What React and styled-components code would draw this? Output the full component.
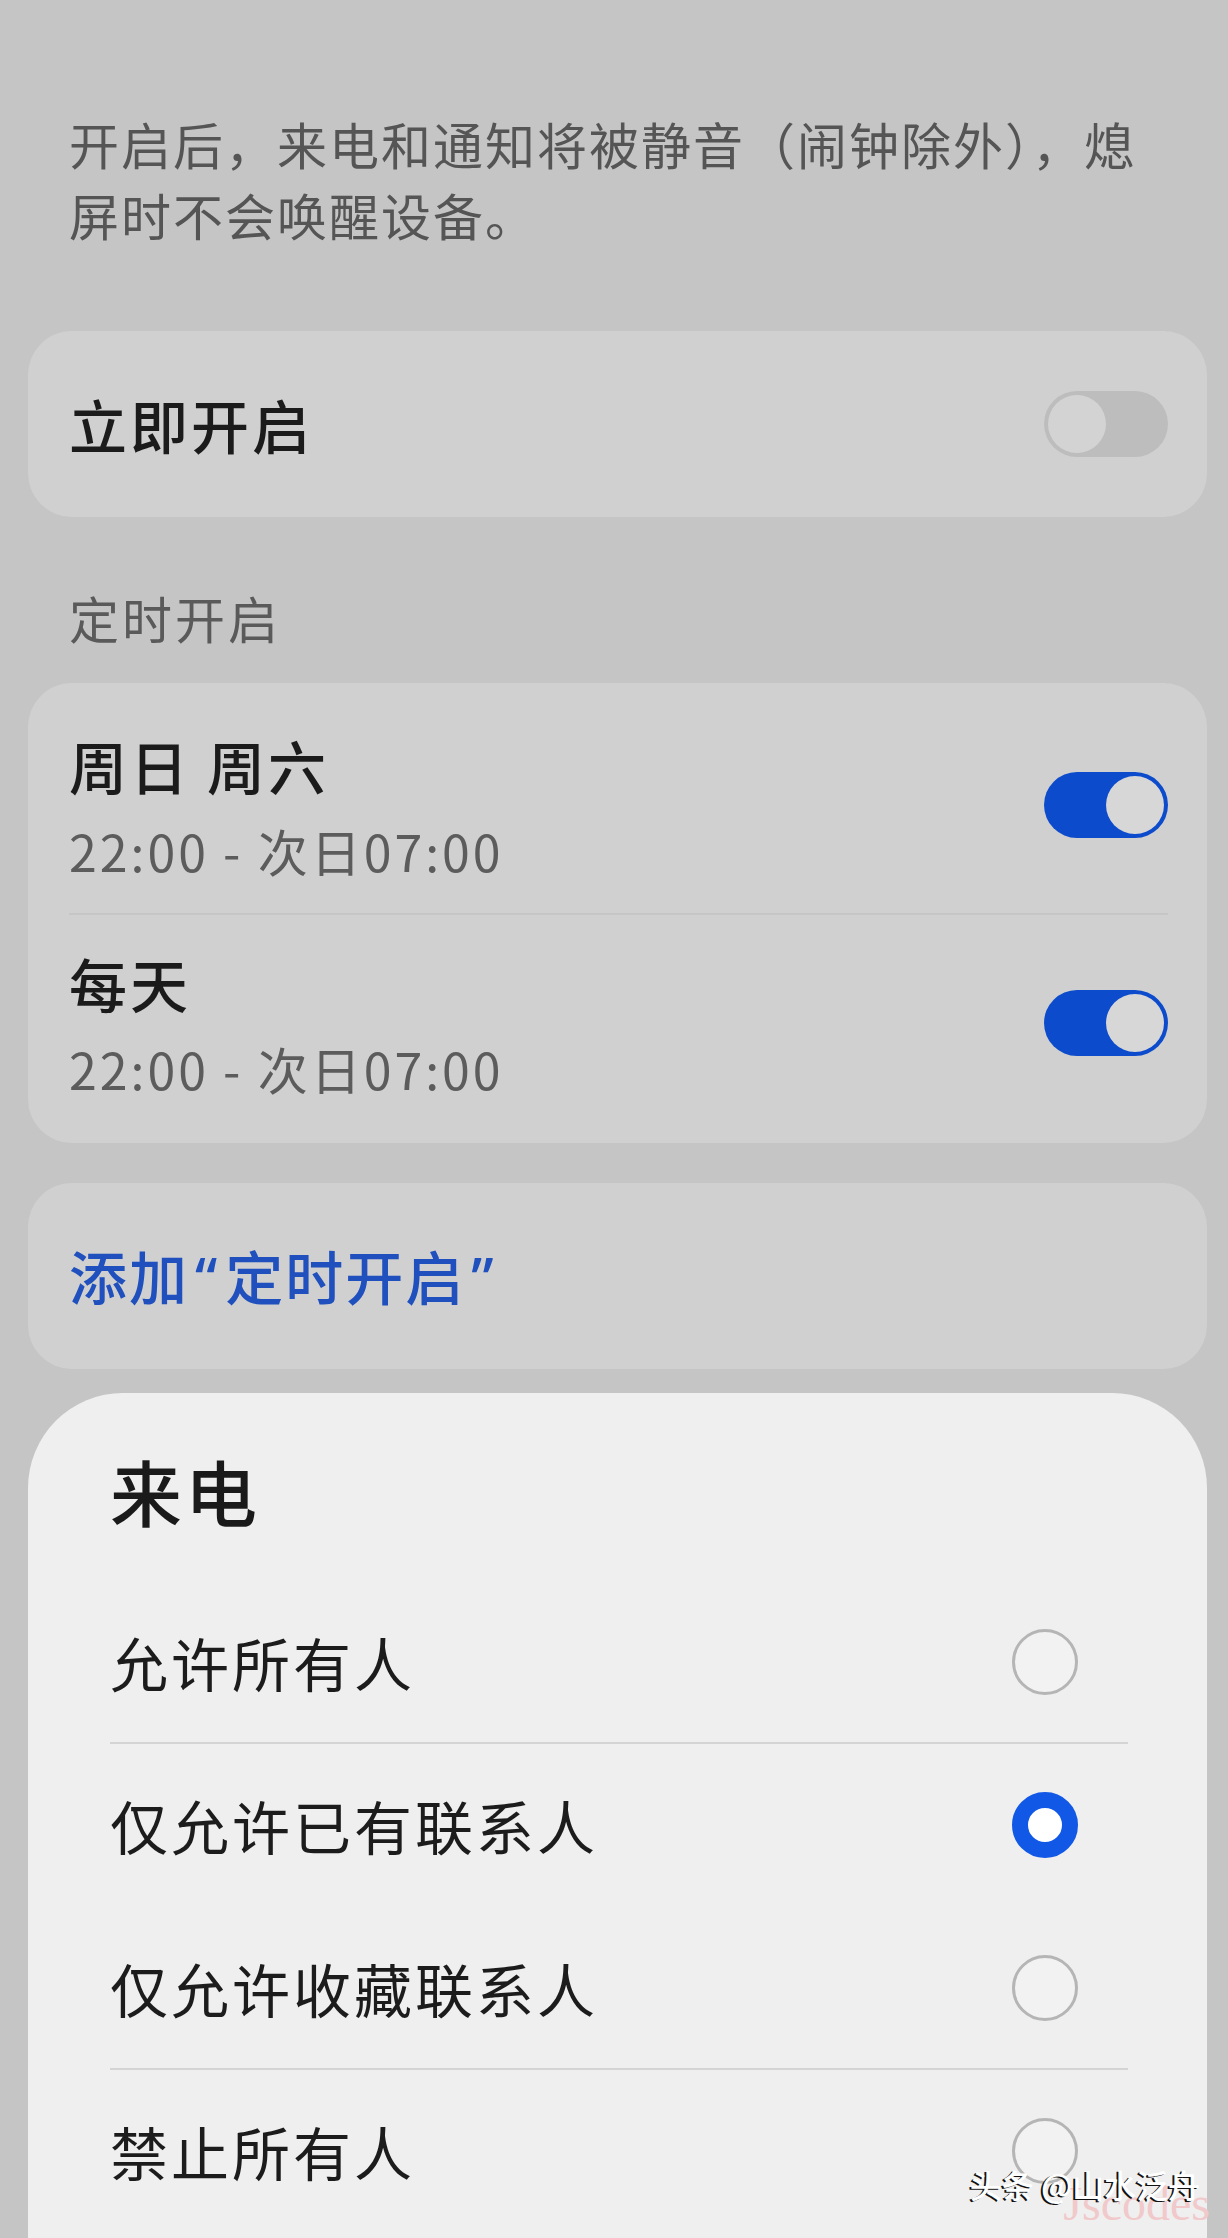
import styled, { createGlobalStyle } from "styled-components"

const GlobalStyle = createGlobalStyle`
    body {
        margin: 0;
        background: #c5c5c5;
        font-family: "Noto Sans CJK SC", "Noto Sans", sans-serif;
    }
`

const schedules = [
    { title: "周日 周六", time: "22:00 - 次日07:00" },
    { title: "每天", time: "22:00 - 次日07:00" },
]

const options = [
    { label: "允许所有人", checked: false, divider: true },
    { label: "仅允许已有联系人", checked: true, divider: false },
    { label: "仅允许收藏联系人", checked: false, divider: true },
    { label: "禁止所有人", checked: false, divider: false },
]

export default function App() {
    return (
        <Page>
            <GlobalStyle />
            <Description>
                开启后，来电和通知将被静音（闹钟除外），熄<br />
                屏时不会唤醒设备。
            </Description>

            <Card top={81}>
                <Title>立即开启</Title>
                <Switch on={false} />
            </Card>

            <SectionLabel>定时开启</SectionLabel>

            <ListCard>
                {schedules.map((s, i) => (
                    <ScheduleRow key={i} last={i === schedules.length - 1}>
                        <div>
                            <Title>{s.title}</Title>
                            <Time>{s.time}</Time>
                        </div>
                        <Switch on />
                    </ScheduleRow>
                ))}
            </ListCard>

            <Card top={40}>
                <AddLink>
                    添加<Quote>“</Quote>定时开启<Quote>”</Quote>
                </AddLink>
            </Card>

            <Sheet>
                <SheetTitle>来电</SheetTitle>
                {options.map((o) => (
                    <OptionRow key={o.label} divider={o.divider}>
                        <OptionLabel>{o.label}</OptionLabel>
                        <Radio checked={o.checked} />
                    </OptionRow>
                ))}
            </Sheet>

            <Mark>
                <Faint>Jscodes</Faint>
                <Credit>头条 @山水泛舟</Credit>
            </Mark>
        </Page>
    )
}

function Switch({ on }) {
    return (
        <Track on={on}>
            <Knob on={on} />
        </Track>
    )
}

const Page = styled.div`
    position: relative;
    display: flex;
    flex-direction: column;
    height: 2238px;
    padding: 0 21px 0 28px;
    box-sizing: border-box;
    overflow: hidden;
`

const Description = styled.p`
    margin: 108px 0 0;
    padding-left: 41px;
    font-size: 50px;
    line-height: 71px;
    letter-spacing: 2px;
    color: #555555;
`

const Card = styled.div`
    display: flex;
    align-items: center;
    justify-content: space-between;
    height: 186px;
    margin-top: ${(p) => p.top}px;
    padding: 0 39px 0 41px;
    box-sizing: border-box;
    background: #d0d0d0;
    border-radius: 44px;
`

const Title = styled.div`
    font-size: 58px;
    line-height: 70px;
    letter-spacing: 3px;
    font-weight: 500;
    color: #1b1b1b;
`

const Time = styled.div`
    margin-top: 20px;
    font-size: 50px;
    line-height: 60px;
    letter-spacing: 3px;
    color: #5c5c5c;
`

const SectionLabel = styled.div`
    margin: 65px 0 31px;
    padding-left: 41px;
    font-size: 50px;
    line-height: 70px;
    letter-spacing: 3px;
    color: #5a5a5a;
`

const ListCard = styled.div`
    padding: 14px 39px 12px 41px;
    background: #d0d0d0;
    border-radius: 44px;
`

const ScheduleRow = styled.div`
    display: flex;
    align-items: center;
    justify-content: space-between;
    padding: 33px 0;
    border-bottom: ${(p) => (p.last ? "none" : "2px solid #c6c6c6")};
`

const Track = styled.div`
    position: relative;
    flex-shrink: 0;
    width: 124px;
    height: 66px;
    border-radius: 33px;
    background: ${(p) => (p.on ? "#0c4bcc" : "#bdbdbd")};
`

const Knob = styled.div`
    position: absolute;
    top: 4px;
    left: ${(p) => (p.on ? "62px" : "4px")};
    width: 58px;
    height: 58px;
    border-radius: 50%;
    background: ${(p) => (p.on ? "#d7d7d7" : "#d3d3d3")};
`

const AddLink = styled.div`
    font-size: 58px;
    line-height: 70px;
    letter-spacing: 2px;
    font-weight: 500;
    color: #1f50bd;
`

const Quote = styled.span`
    font-family: "Noto Sans", sans-serif;
    padding: 0 6px;
`

const Sheet = styled.div`
    flex: 1;
    margin-top: 24px;
    padding: 52px 79px 0 82px;
    background: #efefef;
    border-radius: 95px 95px 0 0;
`

const SheetTitle = styled.div`
    margin-bottom: 46px;
    font-size: 72px;
    line-height: 90px;
    letter-spacing: 3px;
    font-weight: 500;
    color: #1a1a1a;
`

const OptionRow = styled.div`
    display: flex;
    align-items: center;
    justify-content: space-between;
    height: 163px;
    padding-right: 50px;
    box-sizing: border-box;
    border-bottom: 2px solid ${(p) => (p.divider ? "#d4d4d4" : "transparent")};
`

const OptionLabel = styled.div`
    font-size: 58px;
    line-height: 70px;
    letter-spacing: 3px;
    color: #1c1c1c;
`

const Radio = styled.div`
    width: 66px;
    height: 66px;
    box-sizing: border-box;
    border-radius: 50%;
    border: ${(p) => (p.checked ? "16px solid #1258e6" : "3px solid #b5b5b5")};
    background: ${(p) => (p.checked ? "#ffffff" : "#f2f2f2")};
`

const Mark = styled.div`
    position: absolute;
    right: 18px;
    bottom: 0;
    width: 240px;
    height: 76px;
`

const Faint = styled.span`
    position: absolute;
    right: 0;
    bottom: 6px;
    font-family: "Liberation Serif", serif;
    font-size: 48px;
    line-height: 56px;
    color: #f1c9cb;
`

const Credit = styled.span`
    position: absolute;
    right: 10px;
    top: 6px;
    font-size: 32px;
    line-height: 32px;
    font-weight: 500;
    color: #ffffff;
    text-shadow: -2px 1px 0 #111111;
    white-space: nowrap;
`
